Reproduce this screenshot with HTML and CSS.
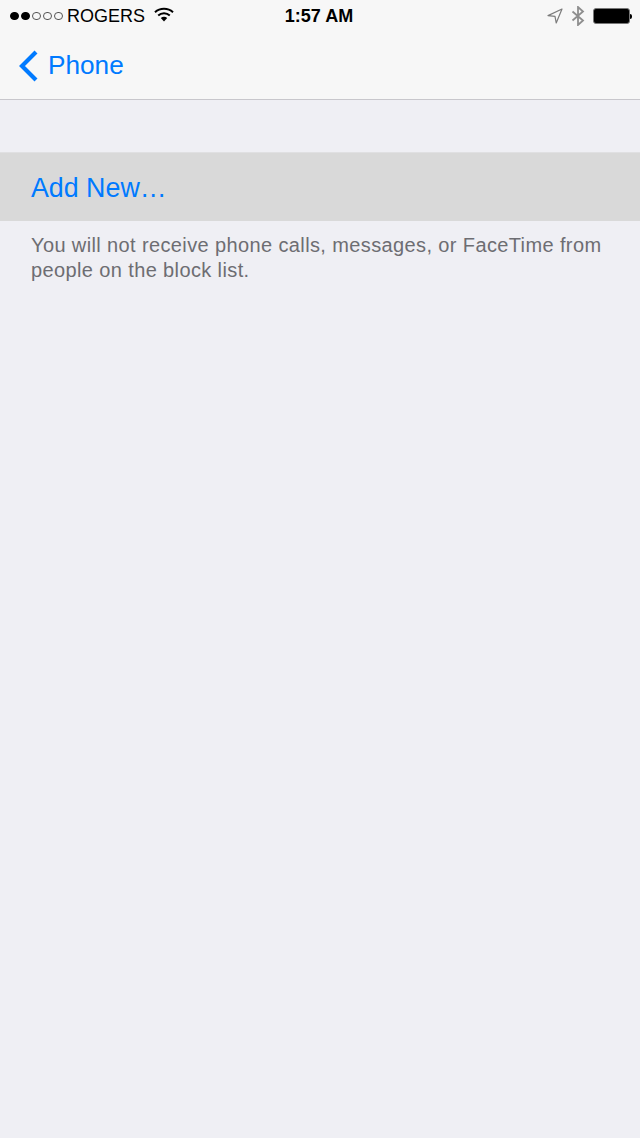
FILE: index.html
```html
<!DOCTYPE html>
<html lang="en">
<head>
    <meta charset="UTF-8">
    <meta name="viewport" content="width=device-width, initial-scale=1.0">
    <title>Blocked</title>
    <link rel="stylesheet" href="styles.css">
</head>
<body>
    <header class="top-bar">
        <div class="status-bar">
            <div class="status-left">
                <div class="signal">
                    <span class="dot on"></span>
                    <span class="dot on"></span>
                    <span class="dot"></span>
                    <span class="dot"></span>
                    <span class="dot"></span>
                </div>
                <span class="carrier">ROGERS</span>
                <svg class="wifi" width="20" height="15" viewBox="0 0 20 15">
                    <path d="M1 5.2C6 .6 14 .6 19 5.2" fill="none" stroke="#000" stroke-width="2"/>
                    <path d="M4.2 8.4C7.5 5.4 12.5 5.4 15.8 8.4" fill="none" stroke="#000" stroke-width="2"/>
                    <path d="M6.8 11C8.7 9.4 11.3 9.4 13.2 11L10 14.4Z" fill="#000"/>
                </svg>
            </div>
            <div class="status-time">1:57 AM</div>
            <div class="status-right">
                <svg class="location" width="16" height="16" viewBox="0 0 16 16">
                    <path d="M15 1L1 7.6L8 8.4L9.2 15Z" fill="none" stroke="#7c7c7c" stroke-width="1.2" stroke-linejoin="round"/>
                </svg>
                <svg class="bluetooth" width="14" height="20" viewBox="0 0 14 20">
                    <path d="M1.5 5.5L12 14.5L7 19V1L12 5.5L1.5 14.5" fill="none" stroke="#8e8e8e" stroke-width="1.8"/>
                </svg>
                <div class="battery">
                    <div class="battery-body"></div>
                    <div class="battery-tip"></div>
                </div>
            </div>
        </div>
        <nav class="nav-bar">
            <a class="back-link">
                <svg class="chevron" width="20" height="32" viewBox="0 0 20 32">
                    <path d="M18 2L4 16L18 30" fill="none" stroke="#007aff" stroke-width="4.2"/>
                </svg>
                <span>Phone</span>
            </a>
        </nav>
    </header>

    <main class="content">
        <div class="row">Add New…</div>
        <p class="note">You will not receive phone calls, messages, or FaceTime from people on the block list.</p>
    </main>
</body>
</html>
```

FILE: styles.css
```css
body {
    margin: 0;
    height: 1138px;
    background-color: #efeff4;
    font-family: "Liberation Sans", Arial, sans-serif;
    overflow: hidden;
}

.top-bar {
    height: 99px;
    background-color: #f7f7f7;
    border-bottom: 1px solid #c8c7cc;
}

.status-bar {
    display: grid;
    grid-template-columns: 1fr auto 1fr;
    align-items: center;
    height: 32px;
    padding: 0 8px 0 10px;
}

.status-left {
    display: flex;
    align-items: center;
}

.signal {
    display: flex;
    gap: 2.4px;
}

.dot {
    width: 8.6px;
    height: 8.6px;
    border: 1px solid #555;
    border-radius: 50%;
    box-sizing: border-box;
}

.dot.on {
    background-color: #000;
    border-color: #000;
}

.carrier {
    margin-left: 4.4px;
    font-size: 18px;
    color: #000;
}

.wifi {
    margin-left: 9px;
    margin-top: -3px;
}

.status-time {
    margin-right: 4px;
    font-size: 18px;
    font-weight: bold;
    color: #000;
}

.status-right {
    display: flex;
    align-items: center;
    justify-content: flex-end;
}

.location {
    margin-right: 8px;
}

.bluetooth {
    margin-right: 8px;
}

.battery {
    display: flex;
    align-items: center;
}

.battery-body {
    width: 37px;
    height: 16px;
    background-color: #000;
    border: 1px solid #777;
    border-radius: 3px;
    box-sizing: border-box;
}

.battery-tip {
    width: 2px;
    height: 5px;
    background-color: #000;
    border-radius: 0 2px 2px 0;
}

.nav-bar {
    display: flex;
    align-items: center;
    height: 67px;
    padding-left: 18px;
}

.back-link {
    display: flex;
    align-items: center;
    gap: 10px;
    font-size: 26.2px;
    color: #007aff;
}

.content {
    padding-top: 52px;
}

.row {
    height: 69px;
    padding-left: 31px;
    line-height: 70px;
    font-size: 26.8px;
    color: #007aff;
    background-color: #d9d9d9;
    border-top: 1px solid #e0e0e2;
    box-sizing: border-box;
}

.note {
    margin: 12px 0 0;
    padding: 0 31px;
    font-size: 20px;
    line-height: 25px;
    letter-spacing: 0.38px;
    color: #6d6d72;
}
```
